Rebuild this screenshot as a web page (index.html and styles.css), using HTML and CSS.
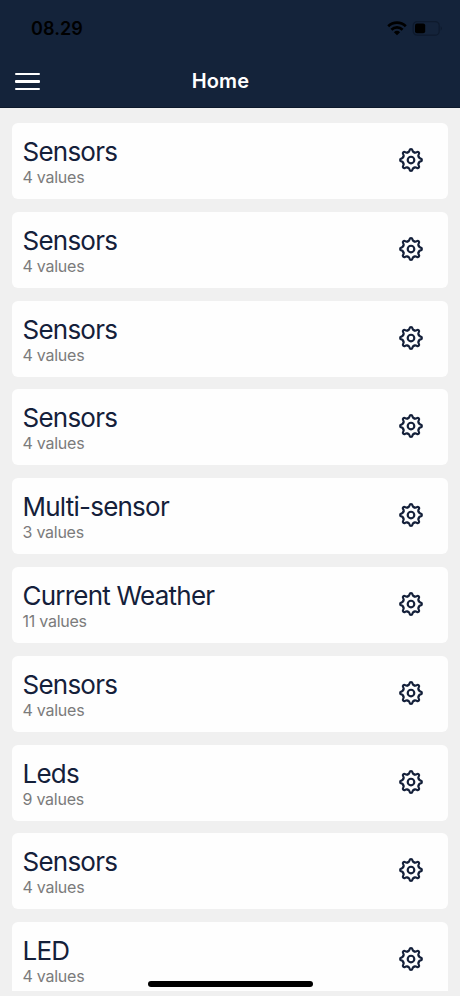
FILE: index.html
```html
<!DOCTYPE html>
<html lang="en">
<head>
<meta charset="utf-8">
<title>Home</title>
<link rel="stylesheet" href="styles.css">
</head>
<body>
<svg class="defs" aria-hidden="true">
  <defs>
    <path id="tooth" d="M-3.18-7.67C-2.1-7.9-1.6-8.6-1.4-9.7A1.42 1.42 0 0 1 1.4-9.7C1.6-8.6 2.1-7.9 3.18-7.67"/>
    <symbol id="gear" viewBox="-13 -13 26 26">
      <g fill="none" stroke="currentColor" stroke-width="2.15" stroke-linecap="round">
        <use href="#tooth"/>
        <use href="#tooth" transform="rotate(45)"/>
        <use href="#tooth" transform="rotate(90)"/>
        <use href="#tooth" transform="rotate(135)"/>
        <use href="#tooth" transform="rotate(180)"/>
        <use href="#tooth" transform="rotate(225)"/>
        <use href="#tooth" transform="rotate(270)"/>
        <use href="#tooth" transform="rotate(315)"/>
        <circle r="3.3"/>
      </g>
    </symbol>
  </defs>
</svg>
<div class="screen">
  <header class="header">
    <div class="status">
      <span class="time">08.29</span>
      <div class="indicators">
        <svg width="20" height="15" viewBox="0 0 20 15"><g fill="none" stroke="#000" stroke-width="2.7"><path d="M1.2 5.2a12.6 12.6 0 0 1 17.6 0"/><path d="M4.4 8.7a8 8 0 0 1 11.2 0"/></g><path d="M10 14.2 6.9 11.2a4.5 4.5 0 0 1 6.2 0z"/></svg>
        <svg width="31" height="15" viewBox="0 0 31 15"><rect x="1.2" y=".6" width="26" height="13.6" rx="4" fill="none" stroke="#0e1a2d" stroke-width="1.2"/><rect x="3" y="2.6" width="10.2" height="9.6" rx="2"/><path d="M28.7 5.2q2.4 2.2 0 4.4z" fill="#0e1a2d"/></svg>
      </div>
    </div>
    <nav class="nav">
      <div class="menu"><i></i><i></i><i></i></div>
      <h1>Home</h1>
    </nav>
  </header>
  <main class="list">
    <section class="card"><div><h2>Sensors</h2><p>4 values</p></div><svg class="gear"><use href="#gear"/></svg></section>
    <section class="card"><div><h2>Sensors</h2><p>4 values</p></div><svg class="gear"><use href="#gear"/></svg></section>
    <section class="card"><div><h2>Sensors</h2><p>4 values</p></div><svg class="gear"><use href="#gear"/></svg></section>
    <section class="card"><div><h2>Sensors</h2><p>4 values</p></div><svg class="gear"><use href="#gear"/></svg></section>
    <section class="card"><div><h2>Multi-sensor</h2><p>3 values</p></div><svg class="gear"><use href="#gear"/></svg></section>
    <section class="card"><div><h2>Current Weather</h2><p>11 values</p></div><svg class="gear"><use href="#gear"/></svg></section>
    <section class="card"><div><h2>Sensors</h2><p>4 values</p></div><svg class="gear"><use href="#gear"/></svg></section>
    <section class="card"><div><h2>Leds</h2><p>9 values</p></div><svg class="gear"><use href="#gear"/></svg></section>
    <section class="card"><div><h2>Sensors</h2><p>4 values</p></div><svg class="gear"><use href="#gear"/></svg></section>
    <section class="card"><div><h2>LED</h2><p>4 values</p></div><svg class="gear"><use href="#gear"/></svg></section>
  </main>
  <div class="home-indicator"></div>
</div>
</body>
</html>
```
FILE: styles.css
```css
* { box-sizing: border-box; margin: 0; padding: 0; }
body { font-family: Inter, "Liberation Sans", sans-serif; background: #f0f0f0; overflow: hidden; }
.defs { position: absolute; width: 0; height: 0; }
.screen { position: relative; width: 460px; height: 996px; display: flex; flex-direction: column; overflow: hidden; padding-bottom: 5px; }
.header { flex: none; height: 108px; background: #14233a; border-bottom: 1px solid #0d192b; }
.status { height: 56px; display: flex; justify-content: space-between; align-items: center; padding: 0 17px 0 31px; }
.time { font-size: 18px; font-weight: 600; line-height: 22px; color: #000; letter-spacing: 0.1px; padding-top: 1px; }
.indicators { display: flex; align-items: center; gap: 5px; }
.indicators svg { display: block; }
.nav { height: 51px; display: grid; grid-template-columns: 1fr auto 1fr; align-items: center; padding: 0 34px 0 15px; }
.menu { display: flex; flex-direction: column; gap: 5px; width: 25px; }
.menu i { height: 2.4px; border-radius: 1px; background: #fff; }
h1 { font-size: 20px; font-weight: 600; line-height: 24px; color: #fff; letter-spacing: 0.2px; margin-bottom: 2px; }
.list { flex: 1; min-height: 0; overflow: hidden; display: flex; flex-direction: column; gap: 12.8px; padding: 15px 12px 0; }
.card { flex: none; height: 76px; display: flex; justify-content: space-between; background: #fefefe; border-radius: 6px; padding: 12px 24px 0 10.5px; }
h2 { font-size: 26px; font-weight: 400; line-height: 33px; color: #14203a; letter-spacing: -0.77px; white-space: nowrap; }
p { font-size: 16px; line-height: 20px; color: #7b7b7b; letter-spacing: -0.25px; margin-top: -1px; }
.gear { width: 26px; height: 26px; color: #14203a; margin-top: 12px; }
.home-indicator { position: absolute; left: 148px; bottom: 9px; width: 165px; height: 6px; border-radius: 3px; background: #000; }
```
